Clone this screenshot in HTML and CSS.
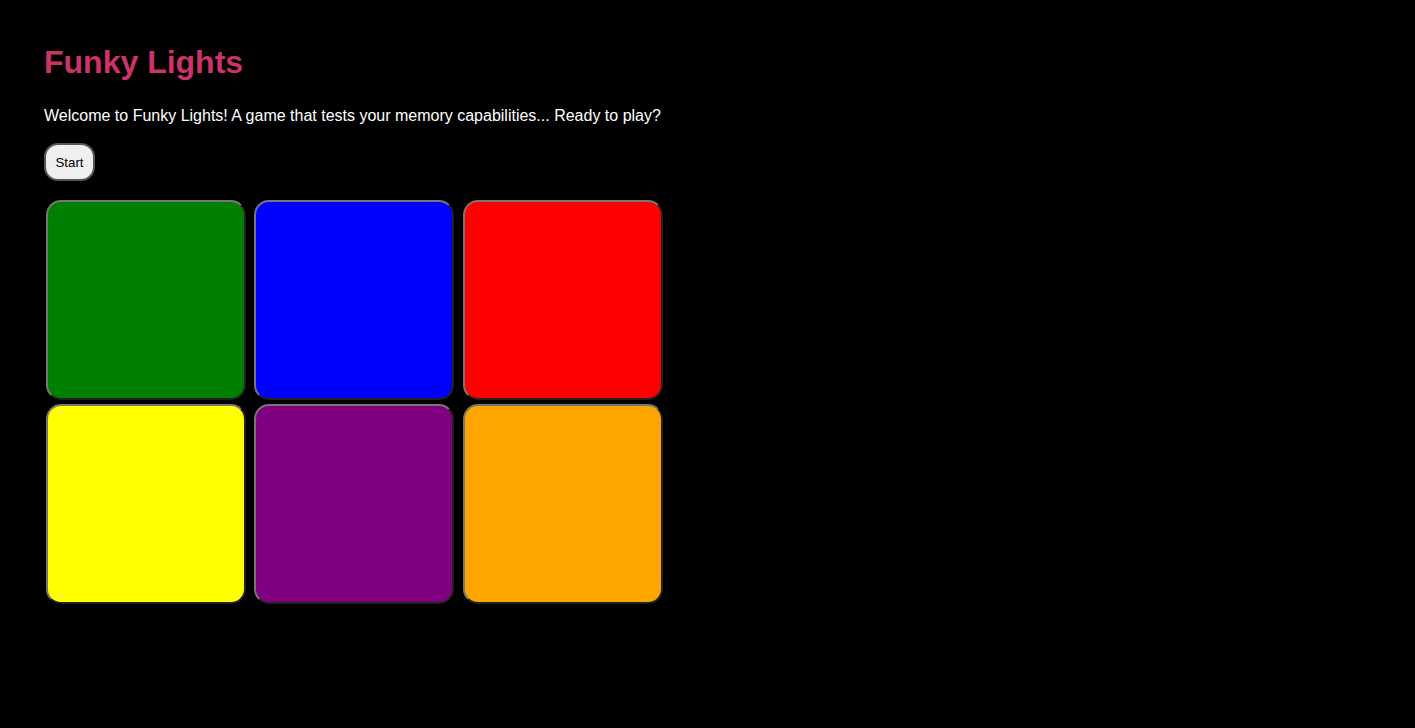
FILE: index.html
```html
<!DOCTYPE html>
<html>
<head>
<meta charset="utf-8">
<title>Funky Lights</title>
<link rel="stylesheet" href="styles.css">
</head>
<body>
<main class="game">
  <h1 class="title">Funky Lights</h1>
  <p class="intro">Welcome to Funky Lights! A game that tests your memory capabilities... Ready to play?</p>
  <button class="start-btn">Start</button>
  <div class="board">
    <button class="tile tile-green"></button>
    <button class="tile tile-blue"></button>
    <button class="tile tile-red"></button>
    <button class="tile tile-yellow"></button>
    <button class="tile tile-purple"></button>
    <button class="tile tile-orange"></button>
  </div>
</main>
</body>
</html>
```
FILE: styles.css
```css
html, body {
  margin: 0;
  background: #000;
}
body {
  font-family: "Liberation Sans", Arial, sans-serif;
  color: #fff;
}
.game {
  padding: 44px 44px 0 44px;
}
.title {
  margin: 0;
  font-size: 32px;
  font-weight: bold;
  line-height: 37px;
  color: #cc3366;
}
.intro {
  margin: 26px 0 0 0;
  font-size: 16px;
  line-height: 18px;
}
.start-btn {
  display: block;
  margin: 18px 0 0 0;
  width: 51px;
  height: 38px;
  padding: 0;
  font-family: "Liberation Sans", Arial, sans-serif;
  font-size: 13.3px;
  color: #000;
  background: #efefef;
  border: 2px solid #555;
  border-radius: 14px;
}
.board {
  margin-top: 19px;
  display: grid;
  grid-template-columns: repeat(3, 200px);
  column-gap: 8.4px;
  row-gap: 4px;
  width: 620px;
  padding-left: 2px;
}
.tile {
  width: 200px;
  height: 200px;
  margin: 0;
  padding: 0;
  border: 2px outset #767676;
  border-radius: 15px;
}
.tile-green { background: #008000; }
.tile-blue { background: #0000ff; }
.tile-red { background: #ff0000; }
.tile-yellow { background: #ffff00; }
.tile-purple { background: #800080; }
.tile-orange { background: #ffa500; }
```
